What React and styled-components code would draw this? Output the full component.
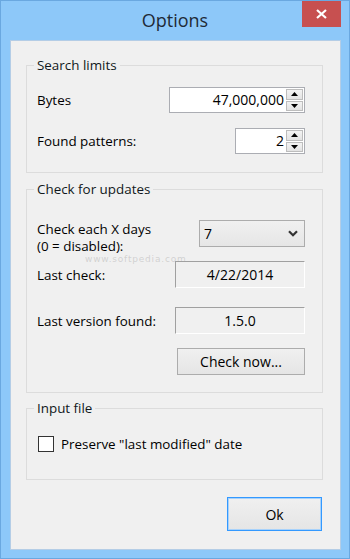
import React from 'react';
import styled, { createGlobalStyle } from 'styled-components';

const Global = createGlobalStyle`
  html, body { margin: 0; padding: 0; background: #8dc8f9; }
  * { box-sizing: border-box; }
`;

const Window = styled.div`
  width: 350px;
  height: 559px;
  background: #8dc8f9;
  border: 1px solid #6aa8e0;
  display: flex;
  flex-direction: column;
  font-family: "Open Sans", "Noto Sans", sans-serif;
  font-size: 13.4px;
  color: #000;
`;

const TitleBar = styled.div`
  height: 39px;
  display: grid;
  grid-template-columns: 1fr auto 1fr;
  align-items: start;
`;

const Title = styled.div`
  grid-column: 2;
  font-size: 18px;
  line-height: 38px;
  color: #1f2a36;
`;

const CloseButton = styled.button`
  justify-self: end;
  margin-right: 8px;
  width: 39px;
  height: 26px;
  border: 0;
  padding: 0;
  background: #c75050;
  display: flex;
  align-items: center;
  justify-content: center;
`;

const Client = styled.div`
  position: relative;
  margin: 0 8px 0 9px;
  height: 510px;
  background: #f0f0f0;
  border: 1px solid #b4cde6;
  padding: 16px 17px 0 15px;
  display: flex;
  flex-direction: column;
`;

const Group = styled.fieldset`
  margin: ${p => p.$mt || 0}px 0 0 0;
  min-inline-size: 0;
  border: 1px solid #dcdcdc;
  padding: ${p => p.$pt}px 17px ${p => p.$pb}px 10px;
  display: flex;
  flex-direction: column;
`;

const Legend = styled.legend`
  padding: 0 3px;
  margin-left: -3px;
  line-height: 16px;
  color: #101820;
`;

const Row = styled.div`
  display: flex;
  justify-content: space-between;
  align-items: ${p => p.$align || 'center'};
  margin-top: ${p => p.$mt || 0}px;
`;

const Label = styled.span`
  line-height: 16px;
`;

const LabelLines = styled.div`
  display: flex;
  flex-direction: column;
  gap: 1px;
  line-height: 16px;
  margin-top: 1px;
`;

const NumBox = styled.div`
  width: ${p => p.$w}px;
  height: 26px;
  background: #fff;
  border: 1px solid #abadb3;
  display: flex;
`;

const NumText = styled.div`
  flex: 1;
  text-align: right;
  padding-right: 2px;
  line-height: 24px;
  font-size: 14px;
`;

const Spinner = styled.div`
  width: 18px;
  padding: 1px 1px 1px 0;
  display: flex;
  flex-direction: column;
  gap: 1px;
`;

const SpinBtn = styled.div`
  flex: 1;
  background: linear-gradient(#f3f3f3, #e3e3e3);
  border: 1px solid #bdbdbd;
  display: flex;
  align-items: center;
  justify-content: center;
`;

const Select = styled.div`
  width: ${p => p.$w}px;
  height: 27px;
  border: 1px solid #acacac;
  background: linear-gradient(#f0f0f0, #e6e6e6);
  display: flex;
  align-items: center;
  justify-content: space-between;
  padding: 0 6px 0 4px;
  font-size: 14px;
`;

const ReadBox = styled.div`
  width: ${p => p.$w}px;
  height: 27px;
  border-top: 1px solid #a0a0a0;
  border-left: 1px solid #a0a0a0;
  border-right: 1px solid #ffffff;
  border-bottom: 1px solid #ffffff;
  text-align: center;
  line-height: 25px;
  font-size: 14px;
`;

const Button = styled.button`
  width: ${p => p.$w}px;
  height: ${p => p.$h}px;
  margin-left: auto;
  font-family: inherit;
  font-size: 14px;
  color: #000;
  background: linear-gradient(#f0f0f0, #e5e5e5);
  border: 1px solid ${p => (p.$default ? '#3399ff' : '#acacac')};
  box-shadow: ${p => (p.$default ? 'inset 0 0 0 1px #a8d2fb' : 'none')};
  padding: 0;
`;

const CheckRow = styled.label`
  display: flex;
  align-items: center;
  gap: 7px;
  margin-left: 1px;
`;

const CheckBox = styled.span`
  width: 16px;
  height: 16px;
  border: 1px solid #333;
  background: #fff;
`;

const Footer = styled.div`
  display: flex;
  justify-content: flex-end;
  margin-top: 17px;
  padding-right: 1px;
`;

const Watermark = styled.div`
  position: absolute;
  left: 74px;
  top: 214px;
  font-family: "DejaVu Sans", sans-serif;
  font-size: 9px;
  line-height: 9px;
  letter-spacing: 0.8px;
  color: rgba(160, 160, 160, 0.4);
  pointer-events: none;
`;

const Up = () => (
  <svg width="7" height="4" viewBox="0 0 7 4"><path d="M0 4 L3.5 0 L7 4 Z" fill="#000" /></svg>
);
const Down = () => (
  <svg width="7" height="4" viewBox="0 0 7 4"><path d="M0 0 L7 0 L3.5 4 Z" fill="#000" /></svg>
);

const NumericUpDown = ({ value, width }) => (
  <NumBox $w={width}>
    <NumText>{value}</NumText>
    <Spinner>
      <SpinBtn><Up /></SpinBtn>
      <SpinBtn><Down /></SpinBtn>
    </Spinner>
  </NumBox>
);

export default function App() {
  return (
    <>
      <Global />
      <Window>
        <TitleBar>
          <Title>Options</Title>
          <CloseButton aria-label="Close">
            <svg width="11" height="10" viewBox="0 0 11 10">
              <path d="M1 1 L10 9 M10 1 L1 9" stroke="#fff" strokeWidth="2.2" />
            </svg>
          </CloseButton>
        </TitleBar>
        <Client>
          <Group $pt={14} $pb={18}>
            <Legend>Search limits</Legend>
            <Row>
              <Label>Bytes</Label>
              <NumericUpDown value="47,000,000" width={136} />
            </Row>
            <Row $mt={15}>
              <Label>Found patterns:</Label>
              <NumericUpDown value="2" width={70} />
            </Row>
          </Group>

          <Group $mt={8} $pt={23} $pb={17}>
            <Legend>Check for updates</Legend>
            <Row $align="flex-start">
              <LabelLines>
                <Label>Check each X days</Label>
                <Label>(0 = disabled):</Label>
              </LabelLines>
              <Select $w={106}>
                <span>7</span>
                <svg width="10" height="7" viewBox="0 0 10 7">
                  <path d="M1 1.2 L5 5.2 L9 1.2" stroke="#333" strokeWidth="2.2" fill="none" />
                </svg>
              </Select>
            </Row>
            <Row $mt={7}>
              <Label>Last check:</Label>
              <ReadBox $w={130}>4/22/2014</ReadBox>
            </Row>
            <Row $mt={19}>
              <Label>Last version found:</Label>
              <ReadBox $w={130}>1.5.0</ReadBox>
            </Row>
            <Row $mt={14}>
              <Button $w={128} $h={27}>Check now...</Button>
            </Row>
          </Group>

          <Group $mt={7} $pt={20} $pb={27}>
            <Legend>Input file</Legend>
            <CheckRow>
              <CheckBox />
              <Label>Preserve "last modified" date</Label>
            </CheckRow>
          </Group>

          <Footer>
            <Button $w={95} $h={34} $default>Ok</Button>
          </Footer>

          <Watermark>www.softpedia.com</Watermark>
        </Client>
      </Window>
    </>
  );
}
